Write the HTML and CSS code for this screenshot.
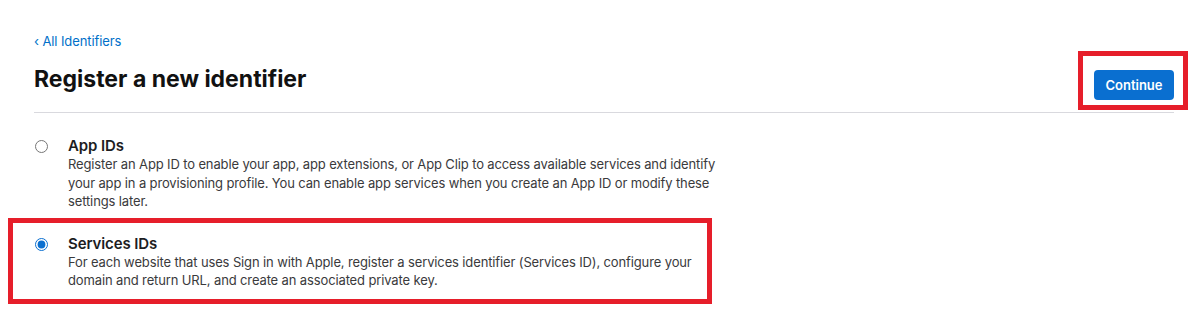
FILE: index.html
```html
<!DOCTYPE html>
<html lang="en">
<head>
    <meta charset="UTF-8">
    <meta name="viewport" content="width=device-width, initial-scale=1.0">
    <title>Register a new identifier</title>
    <link rel="stylesheet" href="styles.css">
</head>
<body>
    <div class="page">
        <a class="back-link" href="#">&lsaquo; All Identifiers</a>
        <div class="page-header">
            <h1>Register a new identifier</h1>
            <span class="marked marked-button">
                <button class="continue-button" type="button">Continue</button>
            </span>
        </div>

        <div class="options">
            <label class="option">
                <input type="radio" name="identifier" value="app">
                <span class="option-text">
                    <span class="option-title">App IDs</span>
                    <span class="option-desc">Register an App ID to enable your app, app extensions, or App Clip to access available services and identify your app in a provisioning profile. You can enable app services when you create an App ID or modify these settings later.</span>
                </span>
            </label>
            <label class="option marked marked-option">
                <input type="radio" name="identifier" value="services" checked>
                <span class="option-text">
                    <span class="option-title">Services IDs</span>
                    <span class="option-desc">For each website that uses Sign in with Apple, register a services identifier (Services ID), configure your domain and return URL, and create an associated private key.</span>
                </span>
            </label>
        </div>
    </div>
</body>
</html>
```

FILE: styles.css
```css
body {
    margin: 0;
    min-height: 310px;
    font-family: Inter, "Liberation Sans", sans-serif;
    color: #1d1d1f;
    background-color: #fff;
}
.page {
    width: 1140px;
    padding: 32px 0 24px 34px;
}
.back-link {
    display: block;
    font-size: 13px;
    line-height: 18px;
    letter-spacing: -0.1px;
    color: #0070c9;
    text-decoration: none;
}
.page-header {
    display: flex;
    justify-content: space-between;
    align-items: flex-start;
    margin-top: 16px;
    padding-bottom: 12px;
    border-bottom: 1px solid #d9d9de;
}
h1 {
    margin: 0;
    font-size: 23px;
    line-height: 26px;
    font-weight: 700;
    color: #111;
}
.continue-button {
    display: block;
    margin-top: 4px;
    width: 80px;
    height: 30px;
    border: none;
    border-radius: 4px;
    background-color: #0a6fd0;
    color: #fff;
    font-family: inherit;
    font-size: 13px;
    font-weight: 600;
    cursor: pointer;
}

/* red annotation boxes drawn over the screenshot */
.marked {
    position: relative;
}
.marked::after {
    content: "";
    position: absolute;
    border: 5px solid #e61e2a;
    pointer-events: none;
}
.marked-button {
    display: block;
}
.marked-button::after {
    top: -15px;
    left: -16px;
    right: -14px;
    bottom: -10px;
}
.marked-option::after {
    top: -17px;
    left: -26px;
    width: 694px;
    bottom: -14px;
}

.options {
    display: flex;
    flex-direction: column;
    gap: 24px;
    padding-top: 24px;
}
.option {
    display: flex;
    align-items: flex-start;
    width: 684px;
}
.option input {
    margin: 3px 0 0 1px;
    width: 13px;
    height: 13px;
    accent-color: #0a6fd0;
}
.option-text {
    display: flex;
    flex-direction: column;
    margin-left: 20px;
    max-width: 652px;
}
.option-title {
    font-size: 15px;
    line-height: 18px;
    font-weight: 600;
    letter-spacing: -0.1px;
    color: #1d1d1f;
}
.option-desc {
    font-size: 13px;
    line-height: 18.5px;
    letter-spacing: -0.13px;
    color: #3a3a3c;
}
```
